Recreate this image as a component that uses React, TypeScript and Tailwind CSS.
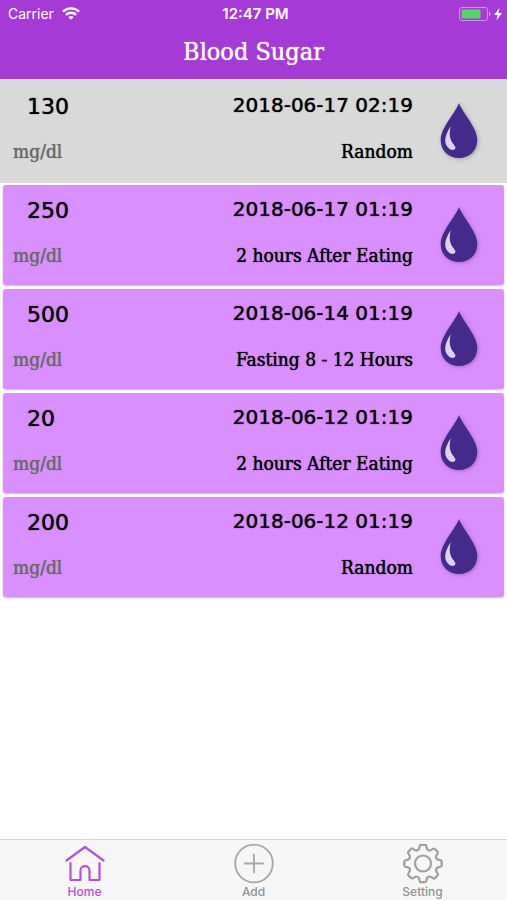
import { useState, type ReactNode } from 'react'
import { clsx } from 'clsx'

type Reading = {
  id: number
  value: number
  takenAt: string
  occasion: string
}

type Tab = {
  label: string
  icon: ReactNode
}

const READINGS: Reading[] = [
  { id: 1, value: 130, takenAt: '2018-06-17 02:19', occasion: 'Random' },
  { id: 2, value: 250, takenAt: '2018-06-17 01:19', occasion: '2 hours After Eating' },
  { id: 3, value: 500, takenAt: '2018-06-14 01:19', occasion: 'Fasting 8 - 12 Hours' },
  { id: 4, value: 20, takenAt: '2018-06-12 01:19', occasion: '2 hours After Eating' },
  { id: 5, value: 200, takenAt: '2018-06-12 01:19', occasion: 'Random' }
]

const TABS: Tab[] = [
  { label: 'Home', icon: <HomeIcon /> },
  { label: 'Add', icon: <AddIcon /> },
  { label: 'Setting', icon: <SettingIcon /> }
]

const GEAR_ANGLES = [0, 45, 90, 135, 180, 225, 270, 315]

export default function App() {
  const [selectedId, setSelectedId] = useState(1)
  const [activeTab, setActiveTab] = useState('Home')

  return (
    <div className="flex min-h-screen flex-col bg-white font-['DejaVu_Serif_Condensed','DejaVu_Serif',serif]">
      <header className="bg-[#a63ad6] text-white">
        <StatusBar />
        <h1 className="text-center text-[25px] leading-[55px] text-shadow-[0_0_1px_currentColor]">
          Blood Sugar
        </h1>
      </header>

      <main className="flex-1">
        <ul>
          {READINGS.map((reading) => (
            <ReadingRow
              isSelected={reading.id === selectedId}
              key={reading.id}
              onSelect={() => setSelectedId(reading.id)}
              reading={reading}
            />
          ))}
        </ul>
      </main>

      <nav className="sticky bottom-0 flex border-t border-[#d4d4d6] bg-[#f6f6f7] font-[Inter,sans-serif]">
        {TABS.map((tab) => (
          <button
            className={clsx(
              'flex flex-1 cursor-pointer flex-col items-center pt-1',
              tab.label === activeTab ? 'text-[#b152dc]' : 'text-[#929292]'
            )}
            key={tab.label}
            onClick={() => setActiveTab(tab.label)}
            type="button"
          >
            {tab.icon}
            <span className="text-xs leading-4 font-medium">{tab.label}</span>
          </button>
        ))}
      </nav>
    </div>
  )
}

function StatusBar() {
  return (
    <div className="grid grid-cols-3 items-center pt-1 pr-1 pl-2 font-[Inter,sans-serif] text-sm leading-5">
      <span className="flex items-center gap-2">
        Carrier
        <WifiIcon />
      </span>
      <span className="text-center text-[15px] font-semibold">12:47 PM</span>
      <span className="flex justify-end">
        <BatteryIcon />
      </span>
    </div>
  )
}

type ReadingRowProps = {
  reading: Reading
  isSelected: boolean
  onSelect: () => void
}

function ReadingRow({ reading, isSelected, onSelect }: ReadingRowProps) {
  return (
    <li className={clsx('px-[3px] py-0.5', isSelected && 'bg-[#d9d9d9]')}>
      <button
        className={clsx(
          'flex w-full cursor-pointer items-center rounded-[3px] py-1.5 pr-[23px] pl-2.5 text-left text-black',
          'text-shadow-[0_0_1px_currentColor]',
          !isSelected && 'bg-[#da8fff] shadow-[0_1px_2px_rgba(0,0,0,0.25)]'
        )}
        onClick={onSelect}
        type="button"
      >
        <span className="flex flex-1 flex-col gap-1 pb-1">
          <span className="pl-3.5 font-['DejaVu_Sans',sans-serif] text-[22px] leading-10">
            {reading.value}
          </span>
          <span className="text-[19px] leading-10 text-[#686868]">mg/dl</span>
        </span>
        <span className="flex flex-col gap-2 pb-1 text-right">
          <span className="font-['DejaVu_Sans',sans-serif] text-xl leading-9">
            {reading.takenAt}
          </span>
          <span className="text-[19px] leading-10">{reading.occasion}</span>
        </span>
        <DropIcon />
      </button>
    </li>
  )
}

function DropIcon() {
  return (
    <svg
      aria-hidden="true"
      className="ml-6 h-15 w-11 drop-shadow-[1px_1px_2px_rgba(0,0,0,0.25)]"
      viewBox="0 0 44 60"
    >
      <path
        d="M22 2C18.500 12 3.700 26.500 3.700 39C3.700 50 12 57 22 57C32 57 40.300 50 40.300 39C40.300 26.500 25.500 12 22 2Z"
        fill="#442a8a"
      />
      <path
        d="M13.800 25C8 34 6.500 41 10.500 46C13 49 16.500 50 18.300 47.500C19 46 17.500 44.500 16 42.500C12.500 38 12 32 13.800 25Z"
        fill="#dcd2ee"
      />
    </svg>
  )
}

function WifiIcon() {
  return (
    <svg
      aria-hidden="true"
      className="h-3.5 w-[18px]"
      fill="none"
      stroke="currentColor"
      strokeWidth="2.4"
      viewBox="0 0 18 14"
    >
      <path d="M1 4.700C5.500 0.300 12.500 0.300 17 4.700" />
      <path d="M4 7.800C6.800 5.100 11.200 5.100 14 7.800" />
      <path
        d="M9 12.700L6.400 10.100C7.900 8.700 10.100 8.700 11.600 10.100Z"
        fill="currentColor"
        stroke="none"
      />
    </svg>
  )
}

function BatteryIcon() {
  return (
    <svg
      aria-hidden="true"
      className="h-3.5 w-11"
      viewBox="0 0 44 14"
    >
      <rect
        fill="none"
        height="13"
        rx="2.500"
        stroke="#cf95ea"
        width="28"
        x="0.500"
        y="0.500"
      />
      <rect
        fill="#4cd964"
        height="9"
        rx="1"
        width="19"
        x="2.500"
        y="2.500"
      />
      <path
        d="M30 4.500C32 5 32 9 30 9.500Z"
        fill="#cf95ea"
      />
      <path
        d="M40.500 1L35 8H38.500L37.500 13.500L43 6H39.500Z"
        fill="white"
      />
    </svg>
  )
}

function HomeIcon() {
  return (
    <svg
      aria-hidden="true"
      className="size-10"
      fill="none"
      stroke="currentColor"
      strokeLinecap="round"
      strokeLinejoin="round"
      strokeWidth="2.2"
      viewBox="0 0 40 40"
    >
      <path d="M1.500 16.500L20 3L38.500 16.500" />
      <path d="M5.500 19V36H15.500V26.500C15.500 20.700 24.500 20.700 24.500 26.500V36H34.500V19" />
    </svg>
  )
}

function AddIcon() {
  return (
    <svg
      aria-hidden="true"
      className="size-10"
      fill="none"
      stroke="#a6a6a6"
      strokeLinecap="round"
      strokeWidth="1.800"
      viewBox="0 0 40 40"
    >
      <circle
        cx="20"
        cy="19.500"
        r="18.800"
      />
      <path d="M20 10.500V28.500M11 19.500H29" />
    </svg>
  )
}

function SettingIcon() {
  return (
    <svg
      aria-hidden="true"
      className="size-10"
      fill="none"
      stroke="#a0a0a0"
      strokeLinecap="round"
      strokeLinejoin="round"
      strokeWidth="2.2"
      viewBox="-20 -19.5 40 40"
    >
      {/* one tooth-to-tooth span, repeated around the centre */}
      {GEAR_ANGLES.map((angle) => (
        <path
          d="M0 -18.700H1.800Q3 -18.700 3.200 -17.700L3.900 -15C4.300 -13.400 6.500 -12.500 7.850 -13.360L10.250 -14.780Q11.100 -15.300 11.950 -14.490L13.220 -13.220"
          key={angle}
          transform={`rotate(${angle})`}
        />
      ))}
      <circle r="8" />
    </svg>
  )
}
